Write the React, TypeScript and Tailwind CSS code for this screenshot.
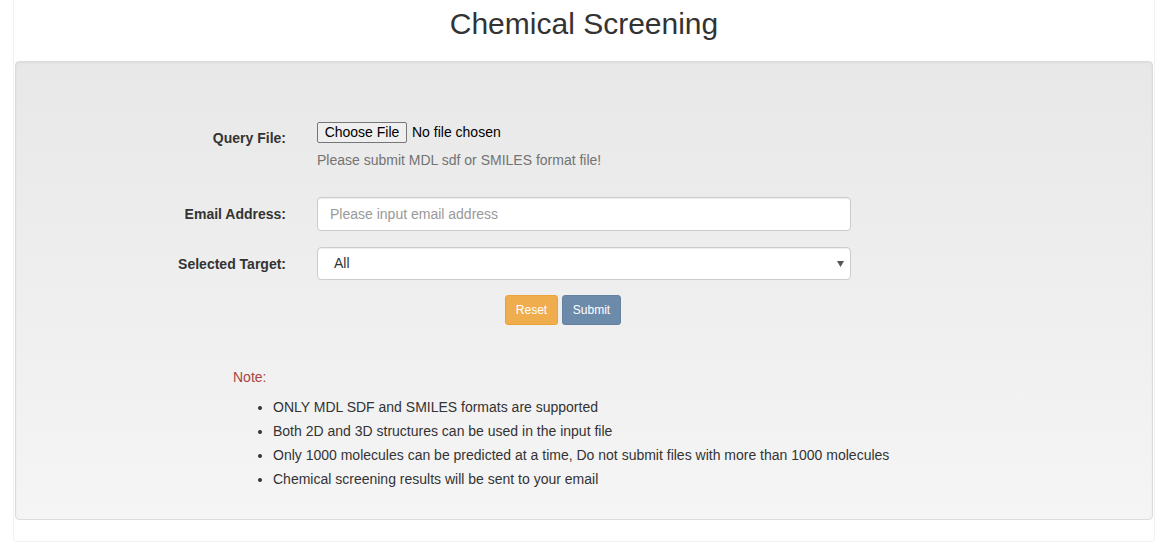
const notes = [
  "ONLY MDL SDF and SMILES formats are supported",
  "Both 2D and 3D structures can be used in the input file",
  "Only 1000 molecules can be predicted at a time, Do not submit files with more than 1000 molecules",
  "Chemical screening results will be sent to your email",
];

const Label = ({ text }: { text: string }) => (
  <div className="w-[270px] shrink-0 pt-[7px] text-right text-[14px] leading-[20px] font-bold text-[#333]">
    {text}
  </div>
);

export default function App() {
  return (
    <div className="min-h-[554px] bg-white font-['Liberation_Sans',Arial,sans-serif] text-[14px] text-[#333]">
      <div className="ml-[13px] w-[1142px] rounded-b-[4px] border-x border-b border-[#f2f2f2] px-[1px] pb-[21px]">
        <h2 className="pt-[7px] pb-[21px] text-center text-[30px] leading-[33px] font-medium text-[#333]">
          Chemical Screening
        </h2>

        <div className="w-[1138px] rounded-[4px] border border-[#dcdcdc] bg-gradient-to-b from-[#e8e8e8] to-[#f5f5f5] pt-[59px] pb-[28px] shadow-[inset_0_1px_3px_rgba(0,0,0,0.05)]">
          {/* query file */}
          <div className="flex">
            <Label text="Query File:" />
            <div className="ml-[31px] w-[534px]">
              <div className="flex items-center pt-[1px]">
                <span className="flex h-[21px] w-[90px] items-center justify-center rounded-[2px] border border-[#767676] bg-[#efefef] text-[14px] text-black">
                  Choose File
                </span>
                <span className="ml-[5px] text-[14px] text-black">No file chosen</span>
              </div>
              <p className="mt-[7px] leading-[20px] text-[#737373]">
                Please submit MDL sdf or SMILES format file!
              </p>
            </div>
          </div>

          {/* email */}
          <div className="mt-[27px] flex">
            <Label text="Email Address:" />
            <div className="ml-[31px] w-[534px]">
              <div className="flex h-[34px] items-center rounded-[4px] border border-[#ccc] bg-white px-[12px] text-[#999] shadow-[inset_0_1px_1px_rgba(0,0,0,0.075)]">
                Please input email address
              </div>
            </div>
          </div>

          {/* target */}
          <div className="mt-[16px] flex">
            <Label text="Selected Target:" />
            <div className="ml-[31px] w-[534px]">
              <div className="flex h-[33px] items-center justify-between rounded-[4px] border border-[#ccc] bg-white pr-[6px] pl-[16px] text-[#333] shadow-[inset_0_1px_1px_rgba(0,0,0,0.075)]">
                <span>All</span>
                <svg width="7" height="6" viewBox="0 0 7 6">
                  <path d="M0 0 L7 0 L3.5 6 Z" fill="#555" />
                </svg>
              </div>
            </div>
          </div>

          {/* buttons */}
          <div className="mt-[15px] flex gap-[4px] pl-[489px]">
            <button className="h-[30px] w-[53px] rounded-[3px] border border-[#eea236] bg-[#f0ad4e] text-[12px] text-white">
              Reset
            </button>
            <button className="h-[30px] w-[59px] rounded-[3px] border border-[#64829f] bg-[#6c8bab] text-[12px] text-white">
              Submit
            </button>
          </div>

          {/* notes */}
          <div className="mt-[42px] pl-[217px]">
            <p className="leading-[20px] text-[#a94442]">Note:</p>
            <ul className="mt-[8px] list-disc pl-[40px]">
              {notes.map((n) => (
                <li key={n} className="leading-[24px]">
                  {n}
                </li>
              ))}
            </ul>
          </div>
        </div>
      </div>
    </div>
  );
}
